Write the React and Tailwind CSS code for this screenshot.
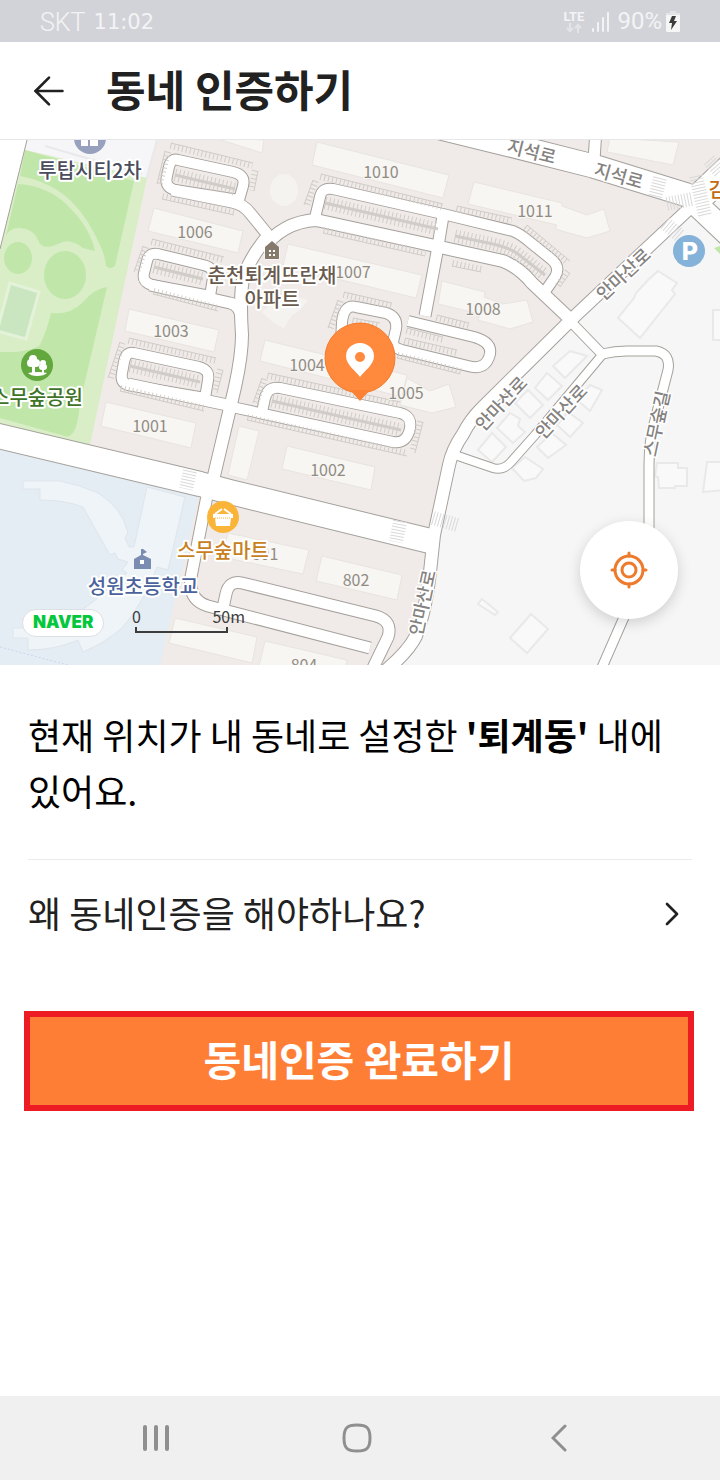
import React from 'react';
import { ArrowLeft, ChevronRight } from 'lucide-react';

const majorRoads = [
    { d: 'M-10 434 L200 484 L230 492 L430 541', w: 25 },
    { d: 'M420 123 L510 145 L593 166 L700 199', w: 24 },
    { d: 'M694 202 L745 154', w: 28 },
    { d: 'M694 202 L745 250', w: 24 },
];

const roads = [
    { d: 'M596 130 L594 160', w: 12 },
    { d: 'M692 206 L575 316 L482 408 Q470 420 463 434 Q452 450 449 465 L434 535 L430 572 Q426 610 416 636 Q408 652 384 672', w: 13 },
    { d: 'M268 236 Q246 262 242 285 Q240 305 242 335 Q242 355 235 387 L213 480', w: 13 },
    { d: 'M178 160 L233 172 Q246 175 243 186 L239 200 L175 190 Q164 187 167 176 L169 167 Q171 158 178 160Z', w: 11 },
    { d: 'M172 190 L232 202 Q243 204 250 213 L268 235', w: 12 },
    { d: 'M158 254 L203 265 Q216 268 213 278 L210 296 L152 285 Q142 282 144 273 L147 261 Q149 252 158 254Z', w: 11 },
    { d: 'M150 285 L230 303 Q240 305 241 318', w: 12 },
    { d: 'M134 353 L199 367 Q210 370 208 380 L205 398 L128 385 Q120 382 122 373 L124 362 Q126 351 134 353Z', w: 11 },
    { d: 'M128 384 L232 406', w: 12 },
    { d: 'M262 250 Q282 222 316 220 L440 247 L503 261 Q520 268 532 283 L569 318', w: 13 },
    { d: 'M315 218 L320 197 Q322 187 333 189 L443 214 L513 231 Q522 235 531 243 L551 259 Q561 267 555 277 L546 290', w: 11 },
    { d: 'M443 216 L437 252 L425 316', w: 12 },
    { d: 'M408 321 L474 337 Q492 342 490 354 Q486 371 468 366 L398 349', w: 11 },
    { d: 'M340 362 L342 322 Q344 304 356 307 L386 313 Q398 317 396 329 L393 342 Q393 348 402 350', w: 11 },
    { d: 'M262 412 L265 398 Q268 386 280 388 L400 413 Q412 416 410 428 Q407 444 393 442 L232 407', w: 11 },
    { d: 'M207 496 L191 577 Q188 600 208 606 L370 648', w: 12 },
    { d: 'M223 608 L226 594 Q229 580 242 583 L376 616 Q393 621 388 637 L372 670', w: 12 },
    { d: 'M570 321 L602 354 Q615 351 627 351 L656 351 Q671 354 668 370 L655 420 Q649 440 649 465 L649 560 L600 672', w: 10 },
    { d: 'M602 355 L535 435 L511 462 Q503 471 493 468 L455 455', w: 9 },
];

const apartments = [
    '317,142 449,175 443,198 312,165',
    '154,208 243,231 238,253 148,231',
    '129,309 219,330 214,352 125,331',
    '106,402 196,423 191,448 101,426',
    '215,138 264,140 262,153',
    '288,244 422,275 416,298 283,266',
    '265,340 407,375 402,397 260,361',
    '407,378 430,391 449,384 456,407 432,413 400,405',
    '474,182 562,203 562,206 587,215 604,209 610,231 587,238 555,229 557,225 468,204',
    '442,281 485,292 484,297 503,304 527,300 533,322 510,329 478,320 480,314 438,304',
    '287,446 375,467 371,490 282,469',
    '239,426 259,431 247,480 228,475',
    '228,533 309,550 303,574 222,557',
    '322,556 402,575 397,600 316,581',
    '175,618 257,637 252,663 169,643',
    '265,641 347,660 345,670 258,670',
    '610,138 679,142 673,165 607,152',
];

const houses = [
    '658,271 677,283 672,290 675,294 640,338 618,318 634,298 636,293 648,280',
    '482,599 498,612 495,615 478,604',
    '531,614 548,629 527,653 510,638',
    '657,463 678,463 678,468 687,468 687,486 675,486 675,488 659,488 658,477 655,476',
    '707,462 725,462 725,490 703,492',
    '525,457 543,469 536,478 524,481 512,468',
    '492,433 506,447 492,462 478,450',
    '510,413 520,419 518,426 525,432 513,443 497,428',
    '547,373 562,386 548,400 535,388',
    '570,351 587,356 565,378 553,366',
    '528,390 543,405 530,418 515,403',
    '552,433 566,445 548,458 537,447',
    '568,412 583,423 570,437 557,425',
    '590,385 602,390 590,411 577,400',
    '713,310 725,310 725,340 713,340',
];

// spine of each parking row, side = which way the bays point
const parkingRows = [
    [171, 143, 253, 163, 1], [165, 151, 157, 184, -1], [258, 171, 254, 191, 1], [162, 199, 234, 215, -1],
    [152, 239, 224, 257, 1], [143, 246, 134, 272, -1], [153, 294, 218, 311, -1],
    [129, 338, 216, 358, 1], [120, 342, 108, 378, -1], [120, 391, 204, 411, -1], [223, 370, 217, 393, 1],
    [321, 174, 443, 204, 1], [313, 180, 304, 205, -1], [323, 233, 425, 256, -1],
    [457, 206, 512, 218, 1], [527, 225, 570, 261, 1], [570, 273, 560, 287, 1], [452, 266, 481, 272, -1],
    [344, 292, 392, 303, 1], [338, 300, 328, 328, -1], [437, 315, 469, 323, 1],
    [407, 328, 443, 337, 1], [405, 338, 457, 350, 1], [397, 358, 460, 374, -1], [353, 318, 380, 323, 1],
    [268, 373, 400, 402, 1], [262, 378, 253, 403, -1], [247, 420, 407, 456, -1], [423, 422, 415, 453, 1],
];

const parkingIslands = [
    'M175 175 L235 189',
    'M154 267 L203 279',
    'M130 366 L200 382',
    'M325 203 L438 229',
    'M455 236 L493 244 Q510 248 518 254 L545 275',
    'M272 401 L401 430',
];

const crosswalks = [
    'M660 178 L655 198',
    'M696 176 L705 216',
    'M667 204 L692 199',
    'M665 223 L680 236',
    'M709 160 L720 172',
    'M190 471 L186 489',
    'M400 521 L396 542',
    'M433 518 L457 525',
];

const numbers = [
    [381, 178, '1010'], [535, 217, '1011'], [195, 238, '1006'], [353, 278, '1007'],
    [171, 337, '1003'], [483, 315, '1008'], [307, 371, '1004'], [406, 399, '1005'],
    [150, 432, '1001'], [328, 476, '1002'], [265, 560, '801'], [356, 586, '802'], [304, 671, '804'],
];

const roadNames = [
    [530, 158, 14, '지석로'],
    [617, 182, 16, '지석로'],
    [628, 279, -43, '안마산로'],
    [506, 408, -47, '안마산로'],
    [566, 416, -47, '안마산로'],
    [429, 604, -78, '안마산로'],
    [663, 425, -78, '스무숲길'],
];

const ParkingRow = ({ row }) => {
    const [x1, y1, x2, y2, side] = row;
    const len = Math.hypot(x2 - x1, y2 - y1);
    const nx = (-(y2 - y1) / len) * side * 3;
    const ny = ((x2 - x1) / len) * side * 3;
    return (
        <g stroke="#d0ccc8">
            <line x1={x1} y1={y1} x2={x2} y2={y2} strokeWidth="1" />
            <line x1={x1 + nx} y1={y1 + ny} x2={x2 + nx} y2={y2 + ny} strokeWidth="6" strokeDasharray="1 3" />
        </g>
    );
};

const PlaceName = ({ x, y, color, children }) => (
    <text x={x} y={y} fill={color} fontSize="20" fontWeight="500" textAnchor="middle" stroke="#fff" strokeWidth="4" strokeLinejoin="round" paintOrder="stroke">
        {children}
    </text>
);

const NeighborhoodMap = () => (
    <svg viewBox="0 140 720 525" preserveAspectRatio="xMidYMid slice" className="block w-full h-full" fontFamily="'Noto Sans CJK KR', sans-serif" role="img" aria-label="현재 위치 지도">
        {/* land */}
        <rect x="-10" y="130" width="740" height="550" fill="#f0ebe8" />
        <path d="M0 140 H27 L0 249Z" fill="#fff" />
        <path d="M27 140 H157 L147 178 L25 150Z" fill="#f6f6f8" />
        <path d="M45 146 L142 174 M157 140 L146 180" stroke="#e9e8ea" strokeWidth="2" fill="none" />
        <path d="M725 180 L692 206 L575 316 L482 408 L463 434 L449 465 L434 535 L430 572 L416 636 L384 672 H725Z" fill="#f6f6f6" />
        <path d="M0 448 L199 496 L160 665 H0Z" fill="#e4ecf4" />
        <path d="M0 647 L68 665" stroke="#ccd8ea" strokeDasharray="2 2" />

        {/* park */}
        <path d="M25 150 L147 178 L90 445 L0 424 V249Z" fill="#d9eec7" />
        <g fill="#c0e6aa">
            <path d="M25 150 L134 181 L115 266 Q110 270 106 266 Q105 255 100 245 Q88 218 72 202 Q52 182 20 176Z" />
            <path d="M18 184 Q50 186 70 208 Q90 228 95 251 L83 248 Q70 238 60 243 Q42 252 38 240 Q33 228 18 228 Q10 228 6 236Z" />
            <ellipse cx="18" cy="258" rx="14" ry="16" />
            <ellipse cx="65" cy="275" rx="21" ry="24" />
            <path d="M107 287 L80 403 Q77 440 65 436 L0 418 V352 Q30 353 40 345 Q47 330 51 313 Q70 315 82 303 Q95 288 107 287Z" />
        </g>
        <path d="M10 283 L39 292 L26 339 L-3 331Z" fill="#cae6c1" stroke="#e4f2da" strokeWidth="3" />
        <path d="M0 249 L27 140" stroke="#a5a19c" />
        <g fill="#f5f3ef">
            <ellipse cx="284" cy="190" rx="14" ry="16" />
            <path d="M262 312 Q285 290 308 300 Q300 312 292 315 L284 328 Q270 322 262 312Z" />
        </g>

        {/* school */}
        <path
            d="M23 481 H60 Q80 485 98 493 L101 495 Q122 508 128 533 L125 538 L129 547 H134 L147 487 L185 497 L168 570 L157 567 Q145 600 123 627 Q105 643 83 652 L78 640 Q55 650 28 650 V638 H13 V628 H28 Q75 625 113 583 L127 573 L122 570 L128 562 L118 559 L115 553 L110 555 L83 507 Q65 500 40 500 V489 H23Z"
            fill="#eff4f8"
            stroke="#dfe5eb"
            strokeWidth="1"
        />

        {apartments.map((points) => (
            <polygon key={points} points={points} fill="#f7f6f3" stroke="#e8e4df" />
        ))}
        {houses.map((points) => (
            <polygon key={points} points={points} fill="#f9f9f9" stroke="#e9e9e9" strokeWidth="2" />
        ))}

        {/* roads: edges first, surface on top */}
        <g fill="none" stroke="#a5a19c" strokeLinejoin="round">
            {[...majorRoads, ...roads].map((road) => (
                <path key={road.d} d={road.d} strokeWidth={road.w + 1} />
            ))}
        </g>
        <g fill="none" stroke="#fff" strokeLinejoin="round">
            {[...majorRoads, ...roads].map((road) => (
                <path key={road.d} d={road.d} strokeWidth={road.w - 1} />
            ))}
        </g>
        <g fill="none" stroke="#d9d9d9" strokeWidth="14" strokeDasharray="1 2">
            {crosswalks.map((d) => (
                <path key={d} d={d} />
            ))}
        </g>

        {/* parking */}
        {parkingRows.map((row) => (
            <ParkingRow key={row.join()} row={row} />
        ))}
        <g fill="none" stroke="#d0ccc8">
            {parkingIslands.map((d) => (
                <g key={d}>
                    <path d={d} strokeWidth="13" strokeDasharray="1 3" />
                    <path d={d} strokeWidth="3" />
                </g>
            ))}
        </g>

        {/* labels */}
        <g fontSize="16" fill="#918b84" textAnchor="middle" stroke="#f7f6f3" strokeWidth="2" paintOrder="stroke">
            {numbers.map(([x, y, label]) => (
                <text key={label} x={x} y={y}>{label}</text>
            ))}
        </g>
        <g fontSize="18" fontWeight="500" fill="#85827f" textAnchor="middle" stroke="#fff" strokeWidth="3" paintOrder="stroke">
            {roadNames.map(([x, y, angle, label]) => (
                <text key={`${x}-${y}`} x={x} y={y} transform={`rotate(${angle} ${x} ${y})`}>{label}</text>
            ))}
        </g>

        <circle cx="90" cy="138" r="16" fill="#97a1bd" />
        <path d="M81 146 V140 H88 V146Z M90 146 V136 H98 V146Z" fill="#fff" />
        <PlaceName x={90} y={178} color="#4a4d5c">투탑시티2차</PlaceName>

        <path d="M272 241 L279 247 V259 H265 V247Z" fill="#857a6b" stroke="#fff" strokeWidth="1" paintOrder="stroke" />
        <path d="M269 250h2v2h-2z M273 250h2v2h-2z M269 254h2v2h-2z M273 254h2v2h-2z" fill="#fff" />
        <PlaceName x={272} y={283} color="#695a4e">춘천퇴계뜨란채</PlaceName>
        <PlaceName x={272} y={307} color="#695a4e">아파트</PlaceName>

        <circle cx="37" cy="365" r="16" fill="#62a83f" />
        <g fill="#fff">
            <circle cx="33" cy="359" r="4" />
            <circle cx="31" cy="363" r="4" />
            <circle cx="36" cy="363" r="4" />
            <circle cx="43" cy="363" r="3" />
            <circle cx="42" cy="367" r="3" />
            <circle cx="44" cy="367" r="3" />
            <path d="M32 363h3v10h-3z M42 368h2v5h-2z" />
            <path d="M28 373 Q38 371 47 373 Q44 376 37 376 Q31 376 28 373Z" />
        </g>
        <PlaceName x={37} y={405} color="#3f7327">스무숲공원</PlaceName>

        <path d="M134 569 V559 L141 555 V549 H143 L147 552 L143 554 V555 L151 559 V569Z" fill="#7b8cb3" />
        <rect x="140" y="560" width="4" height="4" fill="#fff" />
        <PlaceName x={143} y={594} color="#4b639d">성원초등학교</PlaceName>

        <circle cx="223" cy="517" r="16" fill="#fab437" />
        <path d="M213 514 H233 V518 H231 L230 526 H216 L215 518 H213Z" fill="#fff" />
        <path d="M215 514 L222 509 M231 514 L224 509" stroke="#fff" strokeWidth="2" />
        <path d="M215 518 H231" stroke="#fab437" strokeDasharray="1 1" />
        <PlaceName x={223} y={558} color="#c8811f">스무숲마트</PlaceName>

        <circle cx="689" cy="251" r="16" fill="#84b2d8" />
        <text x="690" y="260" fontFamily="Inter, sans-serif" fontSize="25" fontWeight="800" fill="#fff" textAnchor="middle">P</text>
        <PlaceName x={718} y={197} color="#c26a12">감</PlaceName>
        <path d="M714 248 L720 246 V254Z" fill="#c0e6aa" />

        {/* current location */}
        <circle cx="360" cy="358" r="35" fill="#ff8a3d" stroke="#f47b2b" />
        <path d="M350 390 L360 401 L370 390Z" fill="#fb8234" />
        <path d="M360 377 C356 371 346 365 346 356 A14 13 0 0 1 374 356 C374 365 364 371 360 377Z" fill="#fff" />
        <circle cx="360" cy="357" r="5" fill="#ff8a3d" />
    </svg>
);

const StatusBar = () => (
    <div className="flex h-[42px] items-center justify-between bg-[#d2d3d8] px-10 text-[#f3f3f5]">
        <div className="flex items-center gap-2 pt-1">
            <span className="font-[Roboto,sans-serif] text-[25px] font-light">SKT</span>
            <span className="font-['DejaVu_Sans',sans-serif] text-[21px]">11:02</span>
        </div>
        <div className="flex items-center gap-[7px]">
            <div className="flex flex-col items-center">
                <span className="font-[Roboto,sans-serif] text-[13px] leading-[13px] font-bold">LTE</span>
                <svg width="16" height="10" viewBox="0 0 16 10" fill="none" stroke="#e4e4e7" strokeWidth="2">
                    <path d="M4 0 V8 M1 5 L4 8 L7 5 M12 10 V2 M9 5 L12 2 L15 5" />
                </svg>
            </div>
            <svg width="19" height="21" viewBox="0 0 19 21" stroke="#f3f3f5" strokeWidth="2" strokeLinecap="round">
                <path d="M2 18 V20 M7 12 V20 M12 7 V20 M17 2 V20" />
            </svg>
            <div className="flex items-center gap-1">
                <span className="font-[Roboto,sans-serif] text-[24px]">90%</span>
                <svg width="14" height="23" viewBox="0 0 14 23">
                    <path d="M4 1 H10 V3 H14 V6 H0 V3 H4Z" fill="#e4e4e7" />
                    <rect y="5" width="14" height="17" rx="1" fill="#f6f6f6" />
                    <path d="M6 6 H10 L8 11 H11 L5 20 L6 13 H3Z" fill="#3c3c3c" />
                </svg>
            </div>
        </div>
    </div>
);

const NavigationBar = () => (
    <nav className="mt-auto grid h-[84px] grid-cols-3 items-center bg-[#f0f0f0] pl-[55px] pr-[60px] text-[#8f8f8f]">
        <button type="button" aria-label="최근 앱" className="flex justify-center">
            <svg width="26" height="28" viewBox="0 0 26 28" stroke="currentColor" strokeWidth="4" strokeLinecap="round">
                <path d="M2 3 V25 M13 3 V25 M24 3 V25" />
            </svg>
        </button>
        <button type="button" aria-label="홈" className="flex justify-center">
            <svg width="30" height="30" viewBox="0 0 30 30" fill="none" stroke="currentColor" strokeWidth="3">
                <path d="M15 2 C25 2 28 5 28 15 C28 25 25 28 15 28 C5 28 2 25 2 15 C2 5 5 2 15 2Z" />
            </svg>
        </button>
        <button type="button" aria-label="뒤로" className="flex justify-center">
            <svg width="16" height="28" viewBox="0 0 16 28" fill="none" stroke="currentColor" strokeWidth="3" strokeLinecap="round">
                <path d="M14 2 L2 14 L14 26" />
            </svg>
        </button>
    </nav>
);

export default function App() {
    return (
        <div className="flex min-h-screen flex-col bg-white font-['Noto_Sans_CJK_KR',sans-serif]">
            <StatusBar />

            <header className="flex h-[98px] items-center gap-[34px] border-b border-gray-200 pl-[26px]">
                <button type="button" aria-label="뒤로 가기" className="text-[#212121]">
                    <ArrowLeft className="h-[46px] w-[46px]" strokeWidth={1.4} />
                </button>
                <h1 className="pb-[6px] text-[43px] leading-[56px] font-bold text-[#212121]">동네 인증하기</h1>
            </header>

            <div className="relative h-[525px] overflow-hidden">
                <NeighborhoodMap />

                <span className="absolute bottom-7 left-[22px] flex h-7 items-center rounded-full border border-[#dcdfe3] bg-white px-[10px] font-[Inter,sans-serif] text-[17px] font-black text-[#03c73c]">
                    NAVER
                </span>
                <div className="absolute bottom-8 left-[132px] w-[113px] text-[#3c3c3c]">
                    <div className="flex justify-between text-[16px] leading-[22px]">
                        <span>0</span>
                        <span>50m</span>
                    </div>
                    <div className="ml-[3px] h-[6px] w-[93px] border-x-2 border-b-2 border-[#3c3c3c]"></div>
                </div>

                <button
                    type="button"
                    aria-label="현재 위치로 이동"
                    className="absolute right-[42px] bottom-[46px] flex h-[98px] w-[98px] items-center justify-center rounded-full bg-white shadow-[0_4px_14px_rgba(0,0,0,0.16)]"
                >
                    <svg width="38" height="38" viewBox="0 0 38 38" fill="none" stroke="#ee7a2c" strokeWidth="3">
                        <circle cx="19" cy="19" r="14" />
                        <circle cx="19" cy="19" r="7" />
                        <path d="M19 2 V5 M19 33 V36 M2 19 H5 M33 19 H36" strokeLinecap="round" />
                    </svg>
                </button>
            </div>

            <main className="px-7 pb-[43px]">
                <p className="border-b border-[#ebebeb] pt-[41px] pb-[41px] text-[36px] leading-[56px] text-black">
                    현재 위치가 내 동네로 설정한 <b>'퇴계동'</b> 내에 있어요.
                </p>
                <button type="button" className="flex h-[108px] w-full items-center justify-between text-[#212121]">
                    <span className="pb-1 text-[36px] leading-[56px]">왜 동네인증을 해야하나요?</span>
                    <ChevronRight className="h-10 w-10" strokeWidth={1.6} />
                </button>
            </main>

            <div className="pr-[26px] pb-10 pl-6">
                <button type="button" className="h-[100px] w-full border-[6px] border-[#ed1c24] bg-[#ff7e36] pb-[6px] text-[41px] leading-[56px] font-bold text-white">
                    동네인증 완료하기
                </button>
            </div>

            <NavigationBar />
        </div>
    );
}
